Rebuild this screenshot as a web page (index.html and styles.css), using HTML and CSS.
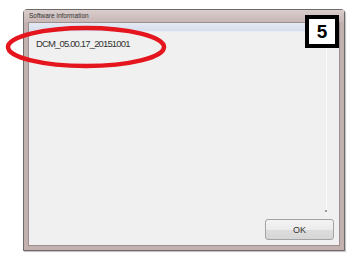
FILE: index.html
```html
<!DOCTYPE html>
<html lang="en">
<head>
  <meta charset="UTF-8">
  <title>Software information</title>
  <link rel="stylesheet" href="styles.css">
</head>
<body>
  <div class="window">
    <div class="titlebar">Software information</div>
    <div class="client">
      <div class="band"></div>
      <div class="content">
        <div class="textbox">
          <div class="version">DCM_05.00.17_20151001</div>
          <div class="grip"></div>
        </div>
        <div class="actions">
          <button class="btn">OK</button>
        </div>
      </div>
    </div>
  </div>
  <svg class="mark" width="170" height="48" viewBox="0 0 170 48">
    <ellipse cx="85" cy="24" rx="78" ry="19" fill="none" stroke="#e4151c" stroke-width="4.5"/>
  </svg>
  <div class="step">5</div>
</body>
</html>
```

FILE: styles.css
```css
body {
  margin: 0;
  padding: 9px 0 0 23px;
  width: 357px;
  height: 262px;
  box-sizing: border-box;
  background: #fff;
  font-family: 'Liberation Sans', Arial, sans-serif;
  position: relative;
  overflow: hidden;
}
.window {
  width: 322px;
  height: 242px;
  box-sizing: border-box;
  border: 1px solid #6e6a6a;
  border-radius: 4px 4px 0 0;
  background: #c3b1b0;
  padding: 0 4px 4px 4px;
  display: flex;
  flex-direction: column;
  box-shadow: 1px 1px 1px rgba(0, 0, 0, 0.25);
}
.titlebar {
  height: 12px;
  font-size: 6.5px;
  line-height: 12px;
  color: #333;
  background: linear-gradient(#d9cecd, #c7b7b6);
  margin: 0 -4px;
  padding: 0 5px;
}
.client {
  flex: 1;
  background: #f0f0f0;
  border: 1px solid #9d8f8e;
  display: flex;
  flex-direction: column;
}
.band {
  height: 8px;
  background: linear-gradient(#e4e9f3, #d6deee);
  border-bottom: 1px solid #e8ecf4;
}
.content {
  flex: 1;
  display: flex;
  flex-direction: column;
}
.textbox {
  flex: 1;
  margin-right: 12px;
  border-right: 1px solid #fafafa;
  position: relative;
}
.version {
  font-size: 9.5px;
  letter-spacing: -0.85px;
  color: #333;
  padding: 6px 0 0 7px;
}
.grip {
  position: absolute;
  right: -1px;
  bottom: 3px;
  width: 2px;
  height: 2px;
  background: #999;
}
.actions {
  display: flex;
  justify-content: flex-end;
  padding: 4px 5px 5px 0;
}
.btn {
  width: 69px;
  height: 21px;
  border: 1px solid #a3a3a3;
  border-radius: 3px;
  background: linear-gradient(#f4f4f4 0%, #ebebeb 50%, #dddddd 51%, #d6d6d6 100%);
  font-family: 'Liberation Sans', Arial, sans-serif;
  font-size: 9px;
  color: #333;
  padding: 0;
}
.mark {
  position: absolute;
  left: 1px;
  top: 23px;
}
.step {
  position: absolute;
  left: 305px;
  top: 15px;
  width: 34px;
  height: 33px;
  box-sizing: border-box;
  border: 4px solid #000;
  background: #fff;
  font-size: 19px;
  font-weight: bold;
  line-height: 25px;
  text-align: center;
  color: #000;
}
```
